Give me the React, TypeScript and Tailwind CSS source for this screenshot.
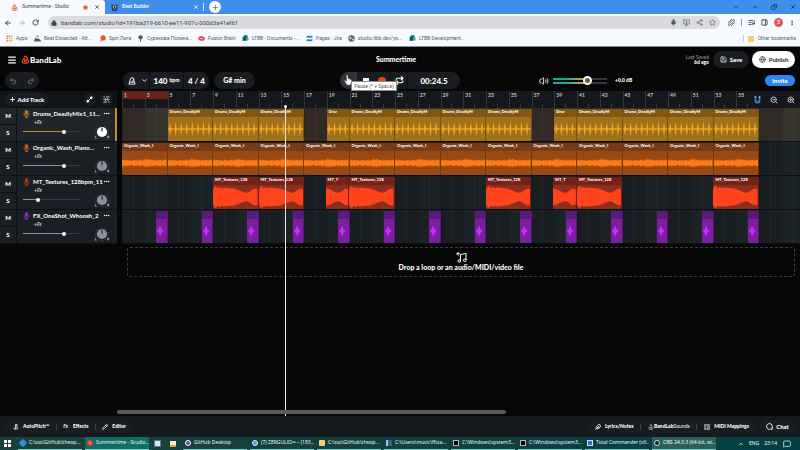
import type { ReactNode } from "react";
import {
  ArrowLeft, ArrowRight, RotateCw, Lock, Mic, Share2, Star, Puzzle, MonitorDown, ListMusic, PanelRight,
  MoreVertical, Minus, Copy, X, Plus, ChevronDown, ChevronUp, Menu, Undo2, Redo2, Repeat, Save, Globe,
  Volume2, ZoomIn, ZoomOut, MessageSquare, MessageCircle, Pencil, MoreHorizontal, Feather,
} from "lucide-react";

const BARS_VISIBLE = 59.6;
const pct = (bars: number) => `${(bars / BARS_VISIBLE) * 100}%`;

/* ---------- browser window ---------- */

function BandLabMark({ className }: { className: string }) {
  return (
    <svg viewBox="0 0 16 16" className={className} fill="none" stroke="#e8501f" strokeWidth="2" strokeLinecap="round">
      <path d="M6 5 3 9.5C1.6 12 3 14.5 5.500 14.500h5C13 14.500 14.400 12 13 9.500L8.500 2" />
      <circle cx="8" cy="10.300" r="2" />
      <path d="M8.500 2 6 3.200" />
    </svg>
  );
}

const bookmarks = [
  { label: "Apps", width: "w-[28px]", icon: "grid", color: "text-[#e2705f]" },
  { label: "Beat Dissected - Att...", width: "w-[65px]", icon: "hill", color: "text-[#555c66]" },
  { label: "Spin Лига", width: "w-[38px]", icon: "racket", color: "text-[#e2542d]" },
  { label: "Сурикова Полина...", width: "w-[61px]", icon: "tree", color: "text-[#4c5a55]" },
  { label: "Fusion Brain", width: "w-[44px]", icon: "blob", color: "text-[#cf4d50]" },
  { label: "LTBB - Documents -...", width: "w-[64px]", icon: "share", color: "text-[#0b7a78]" },
  { label: "Pages - Jira", width: "w-[42px]", icon: "disc", color: "text-[#2f6fe0]" },
  { label: "studio.ltbb.dev/yo...", width: "w-[61px]", icon: "globe", color: "text-[#5b626b]" },
  { label: "LTBB-Development...", width: "w-[64px]", icon: "share", color: "text-[#0b7a78]" },
];

function BookmarkIcon({ kind }: { kind: string }) {
  return (
    <svg viewBox="0 0 12 12" className="size-[7px] shrink-0" fill="currentColor">
      {kind === "grid" && (
        <>
          <path d="M1 1h2.500v2.500H1zM4.800 1h2.500v2.500H4.800zM1 4.800h2.500v2.500H1zM1 8.500h2.500V11H1z" />
          <path fill="#e9b13c" d="M8.500 1H11v2.500H8.500zM4.800 4.800h2.500v2.500H4.800zM8.500 4.800H11v2.500H8.500zM4.800 8.500h2.500V11H4.800zM8.500 8.500H11V11H8.500z" />
        </>
      )}
      {kind === "hill" && <path d="M0 10 3 4l2 3 2-2 5 5v1H0zM4 3a2 2 0 1 1 4 0z" />}
      {kind === "racket" && (
        <>
          <circle cx="7" cy="5" r="4.500" />
          <path d="m4 7 2 2-3.500 3L1 10.500z" fill="#e9a13c" />
        </>
      )}
      {kind === "tree" && (
        <>
          <circle cx="6" cy="4" r="3.700" />
          <path d="M5.300 7h1.400v5H5.300z" />
        </>
      )}
      {kind === "blob" && (
        <>
          <path d="M0 5c2-4 9-4 12 0 0 4-3 5-6 5S1 9 0 5z" />
          <path fill="#f4d9d6" d="M3 5c2 1 4 1 6 0v1.500c-2 1-4 1-6 0z" />
        </>
      )}
      {kind === "share" && (
        <>
          <circle cx="6" cy="4" r="4" />
          <circle cx="8.500" cy="7" r="3" fill="#36b3ad" />
          <path d="M1 4h6v6H1z" fill="#075e5c" />
        </>
      )}
      {kind === "disc" && <path d="M1 8c3-2 6 1 10-1v3c-4 2-7-1-10 1zM11 4C8 6 5 3 1 5V2c4-2 7 1 10-1z" />}
      {kind === "globe" && (
        <>
          <circle cx="6" cy="6" r="5.500" />
          <path fill="#f6f9fd" d="M2 4h4v2H4v2zM7 7l3-1-1 3H7z" />
        </>
      )}
    </svg>
  );
}

function BrowserChrome() {
  return (
    <div className="font-[Roboto,'Noto_Sans',sans-serif] text-[#3d4350]">
      <div className="flex h-[14px] items-stretch bg-[#3f8eea] text-[5px]">
        <div className="flex w-[105px] items-center rounded-tr-[3px] bg-[#f6f9fd] pl-[11px] pr-[5px] text-[6px]">
          <BandLabMark className="size-[7px]" />
          <span className="ml-[4px] flex-1 whitespace-nowrap text-[5px]">Summertime - Studio</span>
          <span className="mr-[6px] size-[5px] rounded-full border border-[#f3a083] bg-[#e5502a]" />
          <button aria-label="Close tab"><X className="size-[6px]" strokeWidth={3} /></button>
        </div>
        <div className="flex w-[98px] items-center pl-[6px] text-white">
          <svg viewBox="0 0 12 12" className="size-[7px]">
            <path fill="#26374f" d="M1 1h3v2h4V1h3v5l-1 6H2L1 6z" />
            <path fill="#fff" d="M3 4h2v2H3zM7 4h2v2H7zM4 8h4v1H4z" />
          </svg>
          <span className="ml-[4px] flex-1 font-medium">Beat Builder</span>
          <button aria-label="Close tab"><X className="mr-[4px] size-[6px]" strokeWidth={3} /></button>
        </div>
        <div className="my-[3px] w-px bg-white/80" />
        <button aria-label="New tab" className="ml-[5px] mt-px flex size-[12px] items-center justify-center rounded-full bg-[#f6f9fd]">
          <Plus className="size-[7px]" />
        </button>
        <div className="ml-auto flex items-center gap-[13px] pr-[4px] text-[#12304f]">
          <button aria-label="Search tabs"><ChevronDown className="size-[6px]" strokeWidth={3} /></button>
          <button aria-label="Minimize"><Minus className="size-[6px]" strokeWidth={3} /></button>
          <button aria-label="Restore"><Copy className="size-[6px] -scale-x-100" strokeWidth={3} /></button>
          <button aria-label="Close"><X className="size-[6px]" strokeWidth={3} /></button>
        </div>
      </div>
      <div className="flex h-[17px] items-center bg-[#f6f9fd] pl-[4px] pr-[5px]">
        <div className="flex w-[44px] gap-[6px]">
          <button aria-label="Back"><ArrowLeft className="size-[8px]" strokeWidth={3} /></button>
          <button aria-label="Forward"><ArrowRight className="size-[8px] text-[#9aa0a8]" /></button>
          <button aria-label="Reload"><RotateCw className="size-[7px]" strokeWidth={3} /></button>
        </div>
        <div className="flex h-[13px] flex-1 items-center rounded-full bg-[#dadbde] pl-[3px] pr-[4px]">
          <Lock className="mr-[4px] size-[6px]" fill="currentColor" />
          <input
            aria-label="Address"
            defaultValue="bandlab.com/studio?id=191ba319-6610-ee11-907c-000d3a41ef61"
            className="flex-1 bg-transparent text-[6px] leading-[8px] outline-none"
          />
          <div className="flex gap-[6px] text-[#50555e]">
            <Mic className="size-[7px]" fill="currentColor" />
            <MonitorDown className="size-[7px]" />
            <Share2 className="size-[7px]" />
            <Star className="size-[7px]" />
          </div>
        </div>
        <div className="ml-[8px] flex items-center gap-[6px]">
          <Puzzle className="size-[7px]" strokeWidth={3} />
          <span className="h-[7px] w-px bg-[#5b9fe8]" />
          <ListMusic className="size-[7px]" strokeWidth={3} />
          <PanelRight className="size-[7px]" strokeWidth={3} />
          <span className="flex size-[9px] items-center justify-center rounded-full bg-[#e0585b] text-[5px] text-white">З</span>
          <MoreVertical className="size-[6px]" strokeWidth={3} />
        </div>
      </div>
      <nav className="flex h-[15px] items-center bg-[#f6f9fd] pl-[6px] pr-[4px] text-[5px] text-[#555b66]">
        {bookmarks.map((b, i) => (
          <a key={i} href="#" className={`flex items-center gap-[3px] whitespace-nowrap ${b.width}`}>
            <span className={b.color}><BookmarkIcon kind={b.icon} /></span>
            {b.label}
          </a>
        ))}
        <a href="#" className="ml-auto flex items-center gap-[4px] whitespace-nowrap border-l border-[#c9ccd2] pl-[4px]">
          <span className="size-[6px] rounded-[1px] bg-[#f6cf6a]" />
          Other bookmarks
        </a>
      </nav>
      <div className="h-px bg-[#8b8b8b]" />
    </div>
  );
}

/* ---------- studio header ---------- */

const pill = "flex items-center rounded-full bg-[#191d21]";

function Header() {
  return (
    <header className="flex h-[25px] items-center pl-[7px] pr-[5px]">
      <div className="flex flex-1 items-center">
        <button aria-label="Menu"><Menu className="size-[10px]" strokeWidth={3} /></button>
        <BandLabMark className="ml-[4px] size-[9px]" />
        <span className="text-[8px] font-black">BandLab</span>
      </div>
      <h1 className="mr-[10px] text-[7px] font-black">Summertime</h1>
      <div className="flex flex-1 items-center justify-end">
        <div className="mr-[4px] text-right text-[5px] leading-[5px] text-[#9a9da1]">
          Last Saved
          <div className="font-black text-white">6d ago</div>
        </div>
        <button className={`${pill} mr-[3px] h-[17px] w-[36px] justify-center gap-[3px] text-[6px] font-black`}>
          <Save className="size-[7px]" />Save
        </button>
        <button className="flex h-[17px] w-[43px] items-center justify-center gap-[3px] rounded-full bg-white text-[6px] font-bold text-[#26292d]">
          <Globe className="size-[7px]" />Publish
        </button>
      </div>
    </header>
  );
}

function Transport() {
  return (
    <div className="flex h-[19px] items-start pl-[5px] pr-[5px]">
      <div className="flex flex-1 items-center">
        <div className="w-[118px]">
          <div className={`${pill} h-[17px] w-[34px] text-[#8a8f95]`}>
            <button aria-label="Undo" className="flex flex-1 justify-center border-r border-[#0f1215]"><Undo2 className="size-[8px]" /></button>
            <button aria-label="Redo" className="flex flex-1 justify-center"><Redo2 className="size-[8px]" /></button>
          </div>
        </div>
        <div className={`${pill} h-[17px] divide-x divide-[#0d0f12] text-[8px] font-black`}>
          <button aria-label="Metronome" className="flex h-full w-[27px] items-center justify-center gap-[5px] pl-[3px]">
            <svg viewBox="0 0 14 14" className="size-[8px]" fill="none" stroke="currentColor" strokeWidth="1.500">
              <path d="M5 1.500h4l3.500 11h-11zM3 9h8M7 9l4-6" />
            </svg>
            <ChevronDown className="size-[7px]" strokeWidth={3} />
          </button>
          <button className="flex h-full w-[34px] items-center justify-center gap-[2px]">140<span className="text-[5px]">bpm</span></button>
          <button className="h-full w-[25px]">4 / 4</button>
        </div>
        <button className={`${pill} ml-[5px] h-[17px] w-[41px] justify-center text-[7px] font-black`}>G# min</button>
      </div>
      <div className={`${pill} relative h-[17px] w-[120px]`}>
        <button aria-label="Pause" className="relative h-full w-[17px] rounded-l-full bg-[#30343a]">
          <svg viewBox="0 0 16 22" className="absolute left-[4px] top-[2px] h-[12px] w-[8px]">
            <path fill="#fff" stroke="#555" d="M5 2q2-2 3 0v6l6 2q2 1 1 4l-2 7H6l-5-8q0-2 2-1l2 2z" />
          </svg>
        </button>
        <button aria-label="Stop" className="flex h-full w-[17px] items-center justify-center"><span className="size-[6px] bg-white" /></button>
        <button aria-label="Record" className="flex h-full w-[17px] items-center justify-center border-r border-[#0d0f12]"><span className="size-[8px] rounded-full bg-[#f5420f]" /></button>
        <button aria-label="Loop" className="flex h-full w-[17px] items-center justify-center border-r border-[#0d0f12]"><Repeat className="size-[9px]" strokeWidth={3} /></button>
        <span className="flex-1 text-center text-[8px] font-black">00:24.5</span>
        <div role="tooltip" className="absolute left-[11px] top-[9px] z-10 h-[10px] w-[46px] border border-[#8b8b8b] bg-white text-center font-[Roboto,sans-serif] text-[5px] leading-[9px] text-[#555]">
          Pause (^ + Space)
        </div>
      </div>
      <div className="flex h-[17px] flex-1 items-center">
        <Volume2 className="ml-[79px] size-[10px]" strokeWidth={2} />
        <div className="ml-[4px] grid w-[54px] items-center">
          <div className="col-start-1 row-start-1 grid gap-[2px]">
            <div className="h-[2px] bg-linear-to-r from-[#23a58a] from-30% via-[#d29a2c] via-60% to-[#33383d] to-65%" />
            <div className="h-[2px] bg-linear-to-r from-[#23a5a0] from-30% via-[#d29a2c] via-60% to-[#33383d] to-65%" />
          </div>
          <input
            type="range"
            aria-label="Master volume"
            defaultValue={66}
            className="col-start-1 row-start-1 h-[9px] w-full appearance-none bg-transparent [&::-webkit-slider-thumb]:size-[9px] [&::-webkit-slider-thumb]:appearance-none [&::-webkit-slider-thumb]:rounded-full [&::-webkit-slider-thumb]:border-[2px] [&::-webkit-slider-thumb]:border-white [&::-webkit-slider-thumb]:bg-[#6d5a3a]"
          />
        </div>
        <span className="ml-[8px] whitespace-nowrap text-[5px] font-black">+0.0 dB</span>
        <button className="ml-auto h-[11px] w-[30px] rounded-full bg-[#2f86ee] text-[6px] font-black leading-[11px]">Invite</button>
      </div>
    </div>
  );
}

/* ---------- tracks ---------- */

type Kind = "drums" | "wash" | "textures" | "fx";
type Clip = { start: number; end: number; label: string };
type Track = { name: string; kind: Kind; volume: number; mic: string; selected?: boolean; clips: Clip[] };

const spans = (pairs: number[][], full: string, short: string): Clip[] =>
  pairs.map(([start, end]) => ({ start, end, label: end - start < 3 ? short : full }));

const every4 = (from: number, to: number) => {
  const out: number[][] = [];
  for (let b = from; b < to; b += 4) out.push([b, b + 4]);
  return out;
};

const tracks: Track[] = [
  {
    name: "Drums_DeadlyMix1_11...", kind: "drums", volume: 73, mic: "text-[#c47c1c]", selected: true,
    clips: spans([...every4(5, 17), [19, 21], ...every4(21, 37), [39, 41], ...every4(41, 57)], "Drums_DeadlyM", "Drur"),
  },
  { name: "Organic_Wash_Piano...", kind: "wash", volume: 73, mic: "text-[#c4611c]", clips: spans(every4(1, 57), "Organic_Wash_I", "") },
  {
    name: "MT_Textures_128bpm_11", kind: "textures", volume: 25, mic: "text-[#b5371c]",
    clips: spans([[9, 13], [13, 17], [18.9, 21], [21, 25], [33, 37], [38.9, 41], [41, 45], [53, 57]], "MT_Textures_128", "MT_T"),
  },
  { name: "FX_OneShot_Whoosh_2", kind: "fx", volume: 73, mic: "text-[#8a2bb8]", clips: every4(4, 57).map(([s]) => ({ start: s, end: s + 1, label: "" })) },
];

const palette: Record<Kind, { body: string; head: string; wave: string }> = {
  drums: { body: "bg-[#a0701b]", head: "bg-[#805814]", wave: "fill-[#f6a61d]" },
  wash: { body: "bg-[#984916]", head: "bg-[#7a3a15]", wave: "fill-[#ff7a12]" },
  textures: { body: "bg-[#8c2d1d]", head: "bg-[#742219]", wave: "fill-[#ff431b]" },
  fx: { body: "bg-[#7b1f9e]", head: "bg-[#5a1a7a]", wave: "fill-[#c62cff]" },
};

const noise = (i: number) => {
  const v = Math.sin(i * 12.9898 + 4.1) * 43758.5453;
  return v - Math.floor(v);
};

const TEXTURE_SHAPE = [7, 11, 8.5, 9.5, 8.5, 9.5, 8.5, 9, 8, 8.5, 7.5, 7, 6, 5, 4.2, 3.8, 4.5, 6, 7.5, 8, 7];

function envelope(kind: Kind, i: number, t: number): number {
  if (kind === "drums") {
    const phase = i % 12;
    if (phase === 4 || phase === 5) return 5 + noise(i - phase) * 2;
    if (phase === 3 || phase === 6) return 2.5;
    if (phase === 10) return 1.5;
    return 0.4 + noise(i) * 0.4;
  }
  if (kind === "wash") return 1.8 + noise(i) * 2 + (t > 0.5 && t < 0.62 ? 1 : 0);
  if (kind === "textures") {
    const at = t * (TEXTURE_SHAPE.length - 1);
    const left = Math.floor(at);
    const right = Math.min(left + 1, TEXTURE_SHAPE.length - 1);
    return TEXTURE_SHAPE[left] + (TEXTURE_SHAPE[right] - TEXTURE_SHAPE[left]) * (at - left) + noise(i) * 0.8;
  }
  const d = Math.abs(t - 0.4);
  return d < 0.07 ? 5.5 - d * 20 : Math.max(0, 3.6 - d * 11);
}

function Wave({ kind, bars }: { kind: Kind; bars: number }) {
  const n = Math.round(bars * 24);
  const top: string[] = [];
  const bottom: string[] = [];
  for (let i = 0; i <= n; i++) {
    const h = envelope(kind, i, kind === "textures" && bars < 3 ? 0.45 + (i / n) * 0.55 : i / n);
    top.push(`${i},${12 - h}`);
    bottom.unshift(`${i},${12 + h}`);
  }
  return (
    <svg viewBox={`0 0 ${n} 24`} preserveAspectRatio="none" className={`h-[24px] w-full ${palette[kind].wave}`}>
      <polygon points={[...top, ...bottom].join(" ")} />
    </svg>
  );
}

function ClipRow({ track }: { track: Track }) {
  const colors = palette[track.kind];
  const cells: ReactNode[] = [];
  let at = 1;
  for (const clip of track.clips) {
    if (clip.start > at) cells.push(<div key={`gap${at}`} className="shrink-0" style={{ width: pct(clip.start - at) }} />);
    cells.push(
      <div key={clip.start} className={`shrink-0 overflow-hidden rounded-[1px] border-r border-black/25 ${colors.body}`} style={{ width: pct(clip.end - clip.start) }}>
        <div className={`h-[8px] overflow-hidden whitespace-nowrap pl-[2px] text-[4px] font-black leading-[6px] ${colors.head}`}>{clip.label}</div>
        <Wave kind={track.kind} bars={clip.end - clip.start} />
      </div>,
    );
    at = clip.end;
  }
  return (
    <div className="grid h-[34px] overflow-hidden border-b border-[#0c0f12]">
      <div className="col-start-1 row-start-1 flex min-w-0 overflow-hidden">
        {Array.from({ length: 30 }, (_, i) => (
          <div
            key={i}
            className={`flex shrink-0 border-l border-black/10 ${
              track.selected ? (i % 2 ? "bg-[#36342a]" : "bg-[#322a26]") : i % 2 ? "bg-[#1c2326]" : "bg-[#191e23]"
            }`}
            style={{ width: pct(2) }}
          >
            <div className="w-1/2 border-r border-white/3" />
          </div>
        ))}
      </div>
      <div className="col-start-1 row-start-1 flex min-w-0 py-px">{cells}</div>
    </div>
  );
}

function Knob({ bright }: { bright?: boolean }) {
  return (
    <svg viewBox="0 0 36 36" className="size-[16px]">
      <circle cx="18" cy="18" r="14.500" fill="none" stroke="#7b828b" strokeWidth="1.500" strokeDasharray="1.500 5" />
      <circle cx="18" cy="18" r="11.500" fill={bright ? "#ffffff" : "#8790a0"} />
      <path d="M18 8v9" stroke="#20252b" strokeWidth="2.500" />
      <path d="M3 27v5h3M31 32v-5h2.500v2.500H31l3 2.500" stroke="#b9bec5" strokeWidth="1.500" fill="none" />
    </svg>
  );
}

function TrackMic({ color }: { color: string }) {
  return (
    <svg viewBox="0 0 12 14" className={`h-[8px] w-[7px] shrink-0 ${color}`} fill="none" stroke="currentColor" strokeWidth="1.500">
      <rect x="3.800" y="0.800" width="4.400" height="7.400" rx="2.200" fill="currentColor" />
      <path d="M1.500 6v1.500a4.500 3.500 0 0 0 9 0V6M6 11v2.500M3.500 13.300h5" />
    </svg>
  );
}

function TrackHeader({ track }: { track: Track }) {
  const fill = track.selected ? "#c98a1e" : "#8a9199";
  return (
    <div className={`flex h-[34px] border-b border-[#0e1114] ${track.selected ? "bg-[#1f252b]" : "bg-[#1a1f25]"}`}>
      <div className="grid w-[17px] shrink-0 grid-rows-2 divide-y divide-[#0e1114] border-r border-[#0e1114] text-[6px] font-black">
        <button aria-label={`Mute ${track.name}`}>M</button>
        <button aria-label={`Solo ${track.name}`}>S</button>
      </div>
      <div className="min-w-0 flex-1 pl-[6px] pr-[5px]">
        <div className="flex h-[11px] items-center">
          <TrackMic color={track.mic} />
          <span className="ml-[3px] flex-1 whitespace-nowrap text-[6px] font-bold leading-[8px]">{track.name}</span>
          <button aria-label={`More options for ${track.name}`}><MoreHorizontal className="size-[7px]" strokeWidth={3} /></button>
        </div>
        <div className="flex h-[22px] items-start">
          <div className="w-[57px]">
            <button className="ml-[11px] block h-[6px] text-[5px] font-black italic leading-[5px] text-[#c5c9ce]">+Fx</button>
            <input
              type="range"
              aria-label={`Volume of ${track.name}`}
              defaultValue={track.volume}
              style={{ backgroundImage: `linear-gradient(to right, ${fill} ${track.volume}%, #363c43 ${track.volume}%)` }}
              className="mt-[6px] block h-px w-full appearance-none [&::-webkit-slider-thumb]:size-[4px] [&::-webkit-slider-thumb]:appearance-none [&::-webkit-slider-thumb]:rounded-full [&::-webkit-slider-thumb]:bg-white"
            />
          </div>
          <div className="ml-auto mt-[5px]"><Knob bright={track.selected} /></div>
        </div>
      </div>
      <div className={`w-[2px] shrink-0 ${track.selected ? "bg-[#c98a1e]" : "bg-transparent"}`} />
    </div>
  );
}

function Ruler() {
  return (
    <div className="relative flex h-[17px] overflow-hidden bg-[#14181d] text-[5px] font-bold text-[#c3c7cc]">
      {Array.from({ length: 30 }, (_, i) => (
        <div key={i} className="flex shrink-0 flex-col border-l border-[#31363c]" style={{ width: pct(2) }}>
          <div className={`h-[8px] pl-px leading-[8px] ${i < 2 ? "bg-[#6a2119]" : ""}`}>{i * 2 + 1}</div>
          <div className="mt-auto h-[4px] w-1/2 border-r border-[#31363c]" />
        </div>
      ))}
      <div className="absolute inset-y-0 right-0 flex w-[50px] items-center justify-between bg-[#14181d] pl-[4px] pr-[5px]">
        <button aria-label="Snap to grid">
          <svg viewBox="0 0 12 14" className="h-[8px] w-[7px]" fill="none" strokeWidth="3">
            <path d="M2.500 4v4a3.500 3.500 0 0 0 7 0V4" stroke="#2a8fd0" />
            <path d="M2.500 0.500v3M9.500 0.500v3" stroke="#8fc4e8" />
          </svg>
        </button>
        <button aria-label="Zoom out"><ZoomOut className="size-[8px]" strokeWidth={3} /></button>
        <button aria-label="Zoom in"><ZoomIn className="size-[8px]" strokeWidth={3} /></button>
      </div>
    </div>
  );
}

function Workspace() {
  return (
    <main className="relative flex min-h-0 flex-1 gap-[5px]">
      <aside className="w-[117px] shrink-0">
        <div className="flex h-[17px] items-center bg-[#101317] pl-[4px] pr-[4px]">
          <button className={`${pill} h-[13px] w-[45px] justify-center gap-[2px] text-[6px] font-black`}>
            <Plus className="size-[7px]" strokeWidth={3} />Add Track
          </button>
          <button aria-label="Automation" className={`${pill} ml-auto size-[13px] justify-center`}>
            <svg viewBox="0 0 14 14" className="size-[7px]" fill="#fff" stroke="#fff" strokeWidth="2">
              <path d="M3.500 10.500 10.500 3.500" />
              <circle cx="3.500" cy="10.500" r="1.800" />
              <circle cx="10.500" cy="3.500" r="1.800" />
            </svg>
          </button>
          <button aria-label="Track layout" className={`${pill} ml-[4px] size-[13px] justify-center`}>
            <svg viewBox="0 0 14 14" className="size-[7px]" fill="none" stroke="#d5d8dc" strokeWidth="1.800">
              <path d="M1 2h3M6 2h7M1 12h7M10 12h3M1 7h2M5 7h4M11 7h2" />
              <path d="M4.500 4.500v5M9.500 4.500v5" />
            </svg>
          </button>
        </div>
        {tracks.map((t) => <TrackHeader key={t.name} track={t} />)}
      </aside>
      <section className="relative min-w-0 flex-1">
        <Ruler />
        {tracks.map((t) => <ClipRow key={t.name} track={t} />)}
        <div className="ml-[5px] mr-[5px] mt-[3px] flex h-[30px] flex-col items-center justify-center rounded-[3px] border border-dashed border-[#3a3d41]">
          <svg viewBox="0 0 22 22" className="size-[11px]" fill="none" stroke="#fff" strokeWidth="2">
            <path d="M4 0v7M0.500 3.500h7M9 18V5l11-2v13" />
            <circle cx="6.500" cy="18" r="2.500" />
            <circle cx="17.500" cy="16.500" r="2.500" />
          </svg>
          <span className="text-[7px] font-black leading-[9px]">Drop a loop or an audio/MIDI/video file</span>
        </div>
        <div className="absolute bottom-0 top-[14px] w-px bg-[#e8e8e8]" style={{ left: pct(14.33) }}>
          <div className="-ml-px size-[3px] rounded-full bg-white" />
        </div>
      </section>
      <div className="absolute bottom-[2px] left-[117px] right-0"><div className="h-[4px] w-[57%] rounded-full bg-[#5b5b5b]" /></div>
    </main>
  );
}

/* ---------- footers ---------- */

function StudioFooter() {
  const divider = <span className="h-[6px] w-px bg-[#3b4147]" />;
  return (
    <footer className="flex h-[21px] items-center bg-[#15191e] pl-[5px] pr-[5px] text-[5px] font-black">
      <div className={`${pill} h-[13px] w-[129px] justify-between pl-[8px] pr-[8px]`}>
        <button className="flex items-center gap-[4px]">
          <svg viewBox="0 0 14 14" className="size-[6px]" fill="none" stroke="#fff" strokeWidth="2">
            <path d="M6 1h3v7M6 1v8l-3 3M9 8l3 4M1 9l3 3h5" />
          </svg>
          AutoPitch™
        </button>
        {divider}
        <button className="flex items-center gap-[5px]"><i className="font-bold">Fx</i>Effects</button>
        {divider}
        <button className="flex items-center gap-[4px]"><Pencil className="size-[6px]" strokeWidth={3} />Editor</button>
      </div>
      <div className={`${pill} ml-auto h-[13px] w-[169px] justify-between pl-[7px] pr-[8px]`}>
        <button className="flex items-center gap-[4px]"><Feather className="size-[6px]" strokeWidth={3} />Lyrics/Notes</button>
        {divider}
        <button className="flex items-center"><BandLabMark className="size-[6px] grayscale brightness-200" />BandLab<span className="font-normal">Sounds</span></button>
        {divider}
        <button className="flex items-center gap-[4px]">
          <svg viewBox="0 0 12 12" className="size-[6px]" fill="none" stroke="#fff" strokeWidth="1.800">
            <path d="M0 2h12M0 6h4M6 6h6M0 10h12" />
          </svg>
          MIDI Mappings
        </button>
      </div>
      <button className={`${pill} ml-[3px] h-[13px] w-[35px] justify-center gap-[3px] text-[6px]`}><MessageCircle className="size-[7px] -scale-x-100" strokeWidth={3} />Chat</button>
    </footer>
  );
}

const windows = [
  { label: "C:\\sss\\GitHub\\theop...", icon: "bg-[#2f8fe0] rotate-45 rounded-[1px]", tone: "" },
  { label: "Summertime - Studio...", icon: "bg-[#f3b23c] rounded-full border-2 border-[#d6473a]", tone: "bg-[#0c6e64]" },
  { label: "GitHub Desktop", icon: "bg-[#6b3fa6] rounded-full border border-white", tone: "" },
  { label: "(7) ZERGULIO∞ – (183...", icon: "bg-[#4aa3e8] rounded-full border border-[#d8e6f3]", tone: "" },
  { label: "C:\\sss\\GitHub\\theop...", icon: "bg-[#f6cf6a] rounded-[1px]", tone: "" },
  { label: "C:\\Users\\music\\ffsta...", icon: "bg-[#3c5a86] border-l-2 border-[#9cc0e8]", tone: "" },
  { label: "C:\\Windows\\system3...", icon: "bg-black border border-[#b7b7b7]", tone: "" },
  { label: "C:\\Windows\\system3...", icon: "bg-black border border-[#b7b7b7]", tone: "" },
  { label: "Total Commander (x6...", icon: "bg-[#2f6fd0] border border-[#cfe0f7]", tone: "" },
  { label: "OBS 24.0.3 (64-bit, wi...", icon: "bg-[#1b1b1b] rounded-full border border-[#d9d9d9]", tone: "bg-[#2c5f5c]" },
];

function TaskButton({ item }: { item: (typeof windows)[number] }) {
  return (
    <button className={`flex h-full w-[64px] shrink-0 items-center gap-[3px] overflow-hidden whitespace-nowrap border-b border-[#7fd3c8] pl-[2px] ${item.tone}`}>
      <span className={`size-[6px] shrink-0 ${item.icon}`} />
      {item.label}
    </button>
  );
}

function Taskbar() {
  return (
    <div className="flex h-[13px] items-center gap-[3px] bg-linear-to-r from-[#1b413c] to-[#043f44] pl-[4px] pr-[9px] font-['Open_Sans',sans-serif] text-[5px] text-white">
      <button aria-label="Start" className="mr-[4px] grid size-[7px] grid-cols-2 gap-px">
        <span className="bg-white" /><span className="bg-white" /><span className="bg-white" /><span className="bg-white" />
      </button>
      {windows.slice(0, 2).map((w, i) => <TaskButton key={i} item={w} />)}
      <button aria-label="Disk tool" className="ml-[2px] mr-px size-[7px] shrink-0 border border-[#5b7a9c] bg-[#dfe6ee]" />
      <button aria-label="Notes" className="ml-[5px] mr-[4px] size-[6px] shrink-0 border-b-2 border-[#e5a530] bg-[#f4efe2]" />
      {windows.slice(2).map((w, i) => <TaskButton key={i} item={w} />)}
      <div className="ml-auto flex items-center gap-[5px]">
        <ChevronUp className="size-[6px]" strokeWidth={3} />
        <span>ENG</span>
        <span className="mr-px">23:14</span>
        <MessageSquare className="size-[8px]" />
      </div>
    </div>
  );
}

export default function App() {
  return (
    <div className="flex h-screen w-full flex-col overflow-hidden bg-[#070707]">
      <BrowserChrome />
      <div className="flex min-h-0 flex-1 flex-col font-[Lato,'Open_Sans',sans-serif] text-white">
        <Header />
        <Transport />
        <Workspace />
        <StudioFooter />
      </div>
      <Taskbar />
    </div>
  );
}
